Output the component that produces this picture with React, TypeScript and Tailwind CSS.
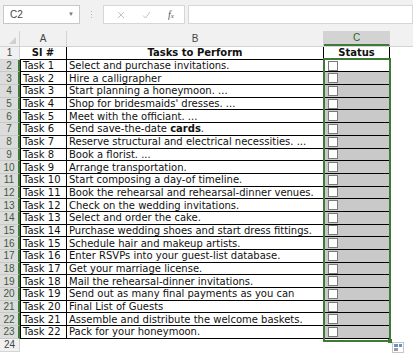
import { ReactNode } from 'react'

const tasks: ReactNode[] = [
  'Select and purchase invitations.',
  'Hire a calligrapher',
  'Start planning a honeymoon. ...',
  "Shop for bridesmaids' dresses. ...",
  'Meet with the officiant. ...',
  <>Send save-the-date <b>cards</b>.</>,
  'Reserve structural and electrical necessities. ...',
  'Book a florist. ...',
  'Arrange transportation.',
  'Start composing a day-of timeline.',
  'Book the rehearsal and rehearsal-dinner venues.',
  'Check on the wedding invitations.',
  'Select and order the cake.',
  'Purchase wedding shoes and start dress fittings.',
  'Schedule hair and makeup artists.',
  'Enter RSVPs into your guest-list database.',
  'Get your marriage license.',
  'Mail the rehearsal-dinner invitations.',
  'Send out as many final payments as you can',
  'Final List of Guests',
  'Assemble and distribute the welcome baskets.',
  'Pack for your honeymoon.',
]

const cellFont = "[font-family:'DejaVu_Sans',Verdana,sans-serif] text-[10px] text-[#111]"

export default function App() {
  return (
    <div className="relative h-[353px] w-[413px] overflow-hidden bg-white">
      {/* formula bar */}
      <div className="flex h-[31px] items-start bg-[#f1f1f1] pt-[5px] pl-[3px]">
        <div className="flex h-[19px] w-[77px] items-center justify-between border border-[#c8c8c8] bg-white pl-[6px] pr-[5px] [font-family:'Liberation_Sans',Arial,sans-serif] text-[10px] text-[#444]">
          <span>C2</span>
          <span className="text-[6px] text-[#777]">▼</span>
        </div>
        <div className="flex h-[19px] w-[23px] flex-col items-center justify-center gap-[2px]">
          <span className="h-[1px] w-[1px] bg-[#b5b5b5]" />
          <span className="h-[1px] w-[1px] bg-[#b5b5b5]" />
          <span className="h-[1px] w-[1px] bg-[#b5b5b5]" />
        </div>
        <div className="flex h-[19px] w-[82px] items-center border border-[#d6d6d6] bg-white pl-[13px]">
          <svg width="8" height="8" viewBox="0 0 8 8" className="mr-[17px]">
            <path d="M1 1L7 7M7 1L1 7" stroke="#c2c2c2" strokeWidth="1" />
          </svg>
          <svg width="9" height="8" viewBox="0 0 9 8" className="mr-[17px]">
            <path d="M1 4.5L3.5 7L8 1" stroke="#c2c2c2" strokeWidth="1" fill="none" />
          </svg>
          <span className="[font-family:'Liberation_Serif',serif] text-[10px] italic text-[#555]">
            f<span className="text-[7px]">x</span>
          </span>
        </div>
        <div className="ml-[3px] h-[19px] flex-1 border border-[#d6d6d6] bg-white" />
      </div>

      {/* column headers */}
      <div className="flex h-[16px] border-b border-[#d4d4d4] bg-[#f1f1f1] [font-family:'Liberation_Sans',Arial,sans-serif] text-[10px] text-[#444]">
        <div className="relative w-[20px] border-r border-[#d4d4d4]">
          <svg width="7" height="7" viewBox="0 0 7 7" className="absolute bottom-[2px] right-[3px]">
            <path d="M7 0V7H0Z" fill="#d0d0d0" />
          </svg>
        </div>
        <div className="flex w-[47px] items-center justify-center border-r border-[#d4d4d4]">A</div>
        <div className="flex w-[257px] items-center justify-center border-r border-[#d4d4d4]">B</div>
        <div className="flex w-[66px] items-center justify-center border-b-2 border-r border-b-[#3d7a35] border-r-[#d4d4d4] bg-[#d3d3d3] text-[#2f5f2a]">C</div>
        <div className="flex-1" />
      </div>

      {/* rows */}
      <div className="flex flex-col">
        <div className="flex h-[12.7px]">
          <RowHead n={1} />
          <div className={`flex w-[47px] items-center justify-center border-r border-b border-black font-bold ${cellFont}`}>Sl #</div>
          <div className={`flex w-[257px] items-center justify-center border-r border-b border-black font-bold ${cellFont}`}>Tasks to Perform</div>
          <div className={`flex w-[66px] items-center justify-center border-r border-b border-black font-bold ${cellFont}`}>Status</div>
        </div>
        {tasks.map((t, i) => (
          <div key={i} className="flex h-[12.7px]">
            <RowHead n={i + 2} selected />
            <div className={`flex w-[47px] items-center border-r border-b border-l border-black pl-[2px] ${cellFont}`}>Task {i + 1}</div>
            <div className={`flex w-[257px] items-center overflow-hidden whitespace-nowrap border-r border-b border-black pl-[2px] ${cellFont}`}>
              <span>{t}</span>
            </div>
            <div className={`flex w-[66px] items-center border-r border-b border-black pl-[4px] ${i === 0 ? 'bg-white' : 'bg-[#c9c9c9]'}`}>
              <span className="h-[10px] w-[10px] border border-[#7a7a7a] bg-white" />
            </div>
          </div>
        ))}
        <div className="flex h-[13px]">
          <RowHead n={24} />
        </div>
      </div>

      {/* selection outline C2:C23 */}
      <div className="absolute left-[323px] top-[58px] h-[284px] w-[68px] border-2 border-[#3d7a35]" />
      <div className="absolute left-[388px] top-[339px] h-[4px] w-[4px] bg-[#3d7a35]" />

      {/* quick analysis button */}
      <div className="absolute left-[392px] top-[342px] h-[11px] w-[12px] border border-[#c6c6c6] bg-white p-[1px]">
        <div className="grid h-full w-full grid-cols-2 gap-[1px]">
          <span className="bg-[#6b8fc7]" />
          <span className="bg-[#6b8fc7]" />
          <span className="bg-[#9a9a9a]" />
          <span className="bg-white" />
        </div>
      </div>
    </div>
  )
}

function RowHead({ n, selected }: { n: number; selected?: boolean }) {
  return (
    <div
      className={`flex w-[20px] items-center justify-center border-b [font-family:'Liberation_Sans',Arial,sans-serif] text-[10px] ${
        selected
          ? 'border-r-2 border-b-[#c9c9c9] border-r-[#3d7a35] bg-[#dcdcdc] text-[#3f5a3a]'
          : 'border-r border-b-[#d4d4d4] border-r-[#d4d4d4] bg-[#f1f1f1] text-[#444]'
      }`}
    >
      {n}
    </div>
  )
}
